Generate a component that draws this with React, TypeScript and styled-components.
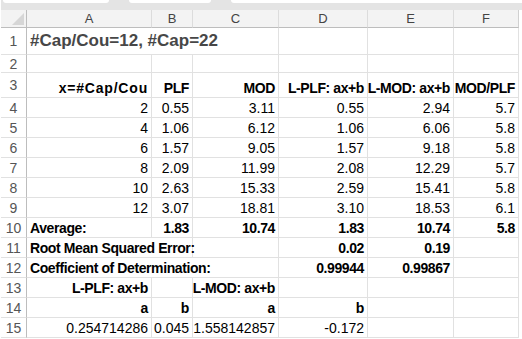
import styled, { createGlobalStyle } from "styled-components";

const GlobalStyle = createGlobalStyle`
  html, body {
    margin: 0;
    padding: 0;
    background: #ffffff;
  }
  body {
    font-family: "Liberation Sans", Arial, sans-serif;
  }
`;

const Window = styled.div`
  display: flex;
  width: 522px;
  height: 339px;
  overflow: hidden;
  background: #ffffff;
`;

const GreenEdge = styled.div`
  width: 1px;
  margin-left: 1px;
  background: #1f7a45;
`;

const Sheet = styled.div`
  flex: 1;
  display: flex;
  flex-direction: column;
`;

const TopStrip = styled.div`
  height: 10px;
  display: flex;
  gap: 20px;
  padding-left: 2px;
  background: #e4e4e4;
`;

const Slot = styled.div<{ $w: number }>`
  width: ${(p) => p.$w}px;
  height: 3px;
  background: #ffffff;
  border-radius: 0 0 3px 3px;
`;

const Grid = styled.div`
  display: grid;
  grid-template-columns: 26px 125px 41px 86px 89px 86px 65px;
`;

const Corner = styled.div`
  display: flex;
  align-items: flex-end;
  justify-content: flex-end;
  padding: 0 2px 2px 0;
  background: #f3f3f3;
  border-right: 1px solid #bdbdbd;
  border-bottom: 1px solid #bdbdbd;
`;

const Triangle = styled.div`
  width: 0;
  height: 0;
  border-bottom: 12px solid #d6d6d6;
  border-left: 12px solid transparent;
`;

const ColHead = styled.div<{ $last?: boolean }>`
  display: flex;
  align-items: center;
  justify-content: center;
  background: #f3f3f3;
  border-right: 1px solid ${(p) => (p.$last ? "#d0d0d0" : "#dcdcdc")};
  border-bottom: 1px solid #bdbdbd;
  color: #444444;
  font-size: 13px;
`;

const RowHead = styled.div`
  display: flex;
  align-items: center;
  justify-content: center;
  background: #ffffff;
  border-right: 1px solid #bdbdbd;
  border-bottom: 1px solid #e1e1e1;
  color: #555555;
  font-size: 14px;
`;

const Cell = styled.div<{ $span: number; $left?: boolean; $bold?: boolean; $title?: boolean; $wide?: boolean }>`
  grid-column: span ${(p) => p.$span};
  display: flex;
  align-items: flex-end;
  justify-content: ${(p) => (p.$left ? "flex-start" : "flex-end")};
  padding: 0 3px 1px 3px;
  border-right: 1px solid #e1e1e1;
  border-bottom: 1px solid #e1e1e1;
  white-space: nowrap;
  overflow: visible;
  color: ${(p) => (p.$title ? "#474747" : "#000000")};
  font-size: ${(p) => (p.$title ? "17px" : "14px")};
  font-weight: ${(p) => (p.$bold || p.$title ? 700 : 400)};
  letter-spacing: ${(p) => (p.$wide ? "0.8px" : p.$bold ? "-0.4px" : "0")};
  line-height: 16px;
  ${(p) => p.$title && "padding-bottom: 5px;"}
`;

type CellDef = { t?: string; b?: boolean; l?: boolean; span?: number; title?: boolean; wide?: boolean };

const b = (t: string): CellDef => ({ t, b: true });
const n = (t: string): CellDef => ({ t });
const e: CellDef = {};

const dataRow = (vals: string[]): CellDef[] => vals.map(n);

const rowHeights = [27, 18, 25, 20, 20, 20, 20, 20, 20, 20, 20, 20, 20, 20, 20];

const rows: CellDef[][] = [
  [{ t: "#Cap/Cou=12, #Cap=22", title: true, l: true, span: 3 }, e, e, e],
  [e, e, e, e, e, e],
  [{ t: "x=#Cap/Cou", b: true, wide: true }, b("PLF"), b("MOD"), b("L-PLF: ax+b"), b("L-MOD: ax+b"), b("MOD/PLF")],
  dataRow(["2", "0.55", "3.11", "0.55", "2.94", "5.7"]),
  dataRow(["4", "1.06", "6.12", "1.06", "6.06", "5.8"]),
  dataRow(["6", "1.57", "9.05", "1.57", "9.18", "5.8"]),
  dataRow(["8", "2.09", "11.99", "2.08", "12.29", "5.7"]),
  dataRow(["10", "2.63", "15.33", "2.59", "15.41", "5.8"]),
  dataRow(["12", "3.07", "18.81", "3.10", "18.53", "6.1"]),
  [{ t: "Average:", b: true, l: true }, b("1.83"), b("10.74"), b("1.83"), b("10.74"), b("5.8")],
  [{ t: "Root Mean Squared Error:", b: true, l: true, span: 2 }, e, b("0.02"), b("0.19"), e],
  [{ t: "Coefficient of Determination:", b: true, l: true, span: 3 }, b("0.99944"), b("0.99867"), e],
  [b("L-PLF: ax+b"), e, b("L-MOD: ax+b"), e, e, e],
  [b("a"), b("b"), b("a"), b("b"), e, e],
  [n("0.254714286"), n("0.045"), n("1.558142857"), n("-0.172"), e, e],
];

const columns = ["A", "B", "C", "D", "E", "F"];

export default function App() {
  return (
    <>
      <GlobalStyle />
      <Window>
        <GreenEdge />
        <Sheet>
          <TopStrip>
            <Slot $w={106} />
            <Slot $w={82} />
            <Slot $w={300} />
          </TopStrip>
          <Grid style={{ gridTemplateRows: `18px ${rowHeights.map((h) => `${h}px`).join(" ")}` }}>
            <Corner>
              <Triangle />
            </Corner>
            {columns.map((c, i) => (
              <ColHead key={c} $last={i === columns.length - 1}>
                {c}
              </ColHead>
            ))}
            {rows.map((row, r) => [
              <RowHead key={`h${r}`}>{r + 1}</RowHead>,
              ...row.map((cell, i) => (
                <Cell
                  key={`${r}-${i}`}
                  $span={cell.span ?? 1}
                  $left={cell.l}
                  $bold={cell.b}
                  $title={cell.title}
                  $wide={cell.wide}
                >
                  {cell.t}
                </Cell>
              )),
            ])}
          </Grid>
        </Sheet>
      </Window>
    </>
  );
}
